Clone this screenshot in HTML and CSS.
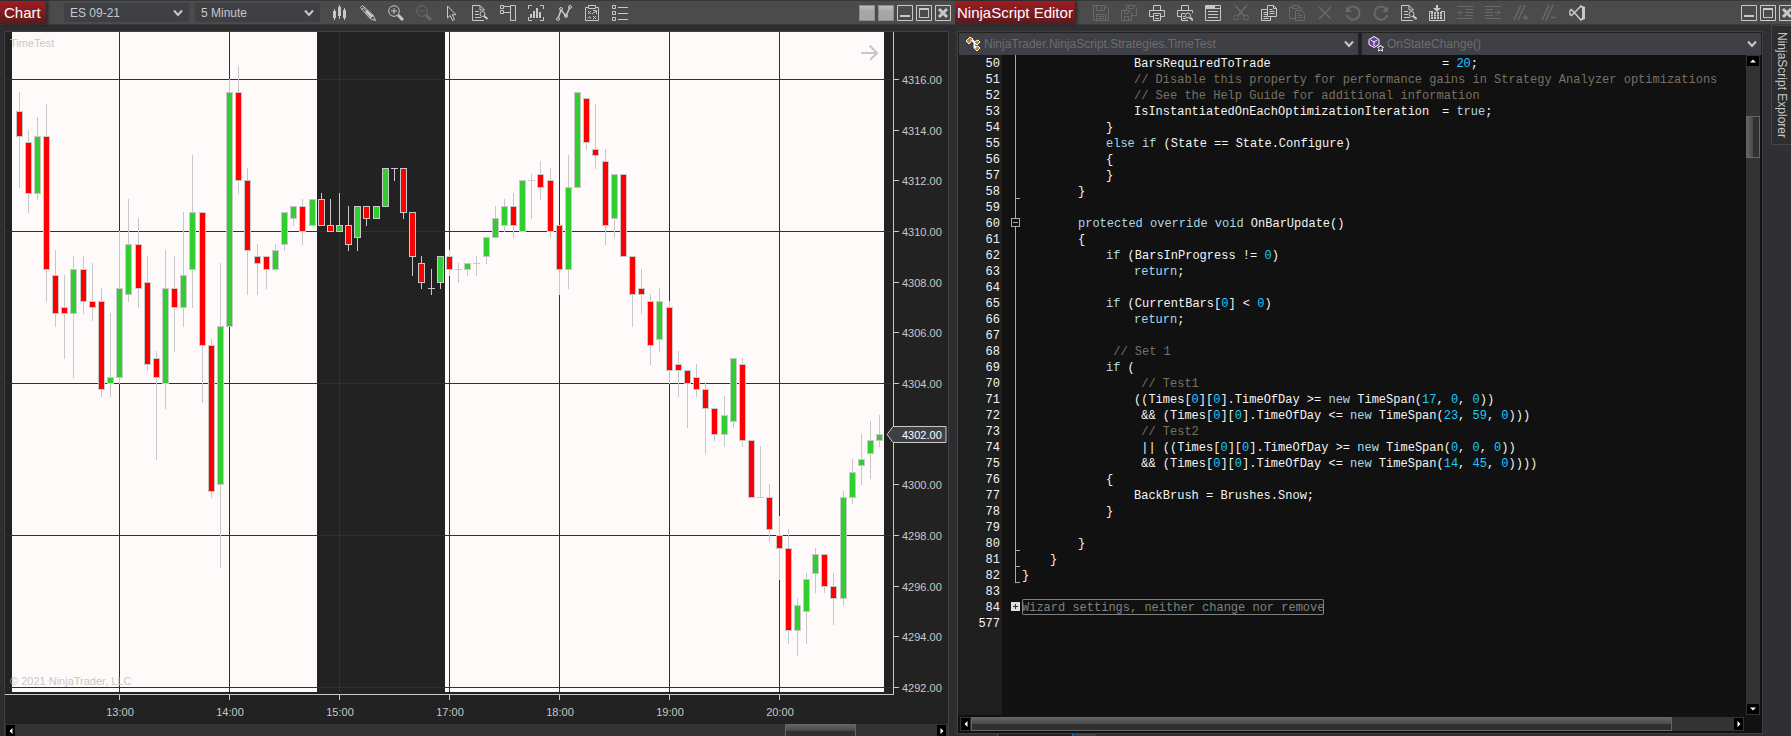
FILE: index.html
```html
<!DOCTYPE html>
<html lang="en">
  <head>
    <meta charset="UTF-8" />
    <meta name="viewport" content="width=device-width, initial-scale=1.0" />
    <title>NinjaTrader</title>
    <link rel="stylesheet" href="styles.css">
  </head>
  <body>
    <main class="desktop">
      <!-- Chart window -->
      <section class="window chart-window">
        <header class="titlebar">
          <h1 class="title">Chart</h1>
          <div class="selects">
            <label class="combo">
              <select aria-label="Instrument"><option>ES 09-21</option></select>
              <svg class="chevron" viewBox="0 0 10 8"><path d="M1 1.500L5 6L9 1.500" /></svg>
            </label>
            <label class="combo">
              <select aria-label="Interval"><option>5 Minute</option></select>
              <svg class="chevron" viewBox="0 0 10 8"><path d="M1 1.500L5 6L9 1.500" /></svg>
            </label>
          </div>
          <nav class="tools">
            <button aria-label="Chart style"><svg viewBox="0 0 16 16"><path class="solid" d="M1 6h3v7H1zM6 2h3v9H6zM11 5h3v8h-3z" /><path d="M2.500 4v11M7.500 0v14M12.500 3v12" /></svg></button>
            <button aria-label="Drawing tools"><svg viewBox="0 0 16 16"><path d="M.5 2.500L2.500 .5L13 10L15.500 15.500L10 13.500zM2 4.500L4.500 2M3.500 3L12 11.500M10 13L13 10" /><path class="solid" d="M5 7l2-2 6 6-2 2z" /></svg></button>
            <button aria-label="Zoom in"><svg viewBox="0 0 16 16"><circle cx="6" cy="6" r="5.300" /><path d="M3 6h6M6 3v6" /><path d="M10 10L15 15" stroke-width="3" /></svg></button>
            <button aria-label="Zoom out" disabled><svg viewBox="0 0 16 16"><circle cx="6" cy="6" r="5.300" /><path d="M3 6h6" /><path d="M10 10L15 15" stroke-width="3" /></svg></button>
            <button aria-label="Cursor"><svg viewBox="0 0 16 16"><path d="M3.500 1v12L6.200 10.500L8.500 15.500L10.500 14.500L8.300 9.700H12z" /></svg></button>
            <button aria-label="Data series"><svg viewBox="0 0 16 16"><path d="M12 15.500H.5V.5H8L12.500 5M8 .5V5h4.500M3 6.500h4M3 9.500h4M3 12.500h6" /><circle cx="10.500" cy="9" r="2.500" /><path d="M12 11l3.500 3" stroke-width="2" /></svg></button>
            <button aria-label="Chart trader"><svg viewBox="0 0 16 16"><path d="M.5 .5h3v3h-3zM.5 5.500h3v3h-3zM10.500 .5h5v15h-5zM4 1.500h6.500M4 7.500h6.500" /></svg></button>
            <button aria-label="Data box"><svg viewBox="0 0 16 16"><path d="M4 .5H.5V4M12 .5h3.500V4M4 15.500H.5V12M12 15.500h3.500V12" /><path class="solid" d="M2 9h2v4H2zM5 6h2v7H5zM8 3h2v10H8zM11 7h2v6h-2z" /></svg></button>
            <button aria-label="Indicators"><svg viewBox="0 0 16 16"><path d="M2 13.500L5 5L10 11L14 2" stroke-width="1.500" /><circle cx="2" cy="14" r="1.500" /><circle cx="5" cy="4" r="1.500" /><circle cx="10" cy="11" r="1.500" /><circle cx="14" cy="2" r="1.500" /></svg></button>
            <button aria-label="Strategies"><svg viewBox="0 0 16 16"><path d="M4 2.500H1.500v13h13v-13H12M4.500 .5h7v3h-7zM4 6l3 3M7 6L4 9M9 11l3 3M12 11l-3 3M4 13.500l1.500-2 1.500 2M8 9l4-3M9 5.500h3.500V9" /></svg></button>
            <button aria-label="Properties"><svg viewBox="0 0 16 16"><path d="M.5 .5h3v3h-3zM.5 6.500h3v3h-3zM.5 12.500h3v3h-3zM6 2.500h10M6 8.500h10M6 14.500h10" /></svg></button>
          </nav>
          <div class="controls">
            <button class="link" aria-label="Instrument link"></button>
            <button class="link" aria-label="Interval link"></button>
            <button aria-label="Minimize"><svg viewBox="0 0 16 16"><path d="M.5 .5h15v15H.5z" /><path class="solid" d="M3 10h10v2H3z" /></svg></button>
            <button aria-label="Maximize"><svg viewBox="0 0 16 16"><path d="M.5 .5h15v15H.5zM3.500 3.500h9v9h-9z" /><path class="solid" d="M3 3h10v2H3z" /></svg></button>
            <button aria-label="Close"><svg viewBox="0 0 16 16"><path d="M.5 .5h15v15H.5z" /><path d="M4 4l8 8M12 4l-8 8" stroke-width="3" /></svg></button>
          </div>
        </header>
        <div class="panel chart-panel">
          <svg id="chart" class="chart" role="img" aria-label="ES 09-21, 5 Minute"></svg>
          <div class="hscroll chart-scroll">
            <button aria-label="Scroll left"><svg viewBox="0 0 8 8"><path class="arrow" d="M5.500 1v6L2.500 4z" /></svg></button>
            <div class="track"><div class="thumb"></div></div>
            <button aria-label="Scroll right"><svg viewBox="0 0 8 8"><path class="arrow" d="M2.500 1v6l3-3z" /></svg></button>
          </div>
        </div>
      </section>

      <!-- Script editor window -->
      <section class="window editor-window">
        <header class="titlebar">
          <h1 class="title">NinjaScript Editor</h1>
          <nav class="tools">
            <button aria-label="Save" disabled><svg viewBox="0 0 16 16"><path d="M.5 .5h12l3 3v12H.5zM3.500 .5v5h8v-5M8.500 2v2M3.500 15.500v-6h9v6M5 11.500h6M5 13.500h6" /></svg></button>
            <button aria-label="Save all" disabled><svg viewBox="0 0 16 16"><path d="M5.500 5V.5h8l2 2v8H11M7.500 .5v3h5v-3M.5 5.500h8l2 2v8H.5zM3.500 5.500v3h4v-3M3.500 15.500v-4h4v4" /></svg></button>
            <button aria-label="Print"><svg viewBox="0 0 16 16"><path d="M4.500 5V.5h7V5M4 11.500H.5v-6h15v6H12M4.500 8.500h7v7h-7zM6 10.500h4M6 13.500h4" /></svg></button>
            <button aria-label="Print preview"><svg viewBox="0 0 16 16"><path d="M4.500 5V.5h7V5M4 11.500H.5v-6h15V8M4.500 15.500v-7H8M4.500 15.500H11M6 11.500h2M6 13.500h3" /><circle cx="11" cy="10.500" r="2.500" /><path d="M13 12.500l3 3" stroke-width="2" /></svg></button>
            <button aria-label="Templates"><svg viewBox="0 0 16 16"><path d="M.5 .5h15v15H.5zM.5 3.500h15M3 6.500h10M3 9.500h10M3 12.500h10" /><path d="M1 2h9" stroke-width="2" /></svg></button>
            <button aria-label="Cut" disabled><svg viewBox="0 0 16 16"><path d="M2 0L11 11M14 0L5 11" stroke-width="1.500" /><circle cx="3" cy="12.500" r="2.500" /><circle cx="13" cy="12.500" r="2.500" /></svg></button>
            <button aria-label="Copy"><svg viewBox="0 0 16 16"><path d="M6.500 .5h6l3 3v8h-9zM12.500 .5v3h3M8.500 4.500h3M8.500 6.500h5M8.500 8.500h5M6 4.500H.5v11h9V12M2.500 7.500H6M2.500 9.500H6M2.500 11.500H6M2.500 13.500h5" /></svg></button>
            <button aria-label="Paste" disabled><svg viewBox="0 0 16 16"><path d="M3 2.500H.5v11H6M10 2.500h2V5M3.500 .5h6v3h-6zM6.500 5.500h6l3 3v7h-9zM8.500 8.500h3M8.500 10.500h5M8.500 12.500h5" /></svg></button>
            <button aria-label="Delete" disabled><svg viewBox="0 0 16 16"><path d="M2 2l12 12M14 2L2 14" stroke-width="1.500" /></svg></button>
            <button aria-label="Undo" disabled><svg viewBox="0 0 16 16"><path d="M3 4a6.500 6.500 0 1 1-1.200 6" stroke-width="2" /><path class="solid" d="M1 1v6h6z" /></svg></button>
            <button aria-label="Redo" disabled><svg viewBox="0 0 16 16"><path d="M13 4a6.500 6.500 0 1 0 1.200 6" stroke-width="2" /><path class="solid" d="M15 1v6H9z" /></svg></button>
            <button aria-label="Find"><svg viewBox="0 0 16 16"><path d="M12 15.500H.5V.5H8L12.500 5M8 .5V5h4.500M3 6.500h4M3 9.500h4M3 12.500h6" /><circle cx="10.500" cy="9" r="2.500" /><path d="M12 11l3.500 3" stroke-width="2" /></svg></button>
            <button aria-label="Compile"><svg viewBox="0 0 16 16"><path class="solid" d="M7 0h2v3h3L8 7L4 3h3z" /><path d="M4 6.500H.5v9h15v-9H12" /><path d="M2 8h12M2 10.500h12M2 13h12" stroke-width="2" stroke-dasharray="2 1" /></svg></button>
            <button aria-label="Outdent" disabled><svg viewBox="0 0 16 16"><path d="M0 1.500h16M8 4.500h8M8 7.500h8M8 10.500h8M0 13.500h16M6 7.500H1M4 4.500l-3 3 3 3" /></svg></button>
            <button aria-label="Indent" disabled><svg viewBox="0 0 16 16"><path d="M0 1.500h16M0 4.500h8M0 7.500h8M0 10.500h8M0 13.500h16M10 7.500h5M12 4.500l3 3-3 3" /></svg></button>
            <button aria-label="Comment" disabled><svg viewBox="0 0 16 16"><path d="M1 15L8 0M5 15L12 0M10 12.500h5M12.500 10v5" stroke-width="1.500" /></svg></button>
            <button aria-label="Uncomment" disabled><svg viewBox="0 0 16 16"><path d="M1 15L8 0M5 15L12 0M10 12.500h5" stroke-width="1.500" /></svg></button>
            <button aria-label="Visual Studio"><svg viewBox="0 0 16 16"><path d="M11.500 1.500L2.500 10.500L1 9.500V5.500L2.500 4.500L11.500 14.500" stroke-width="1.500" /><path class="solid" d="M11 0l5 2v12l-5 2v-2l2-1V3l-2-1z" /></svg></button>
          </nav>
          <div class="controls">
            <button aria-label="Minimize"><svg viewBox="0 0 16 16"><path d="M.5 .5h15v15H.5z" /><path class="solid" d="M3 10h10v2H3z" /></svg></button>
            <button aria-label="Maximize"><svg viewBox="0 0 16 16"><path d="M.5 .5h15v15H.5zM3.500 3.500h9v9h-9z" /><path class="solid" d="M3 3h10v2H3z" /></svg></button>
            <button aria-label="Close"><svg viewBox="0 0 16 16"><path d="M.5 .5h15v15H.5z" /><path d="M4 4l8 8M12 4l-8 8" stroke-width="3" /></svg></button>
          </div>
        </header>

        <div class="editor-body">
          <div class="panel editor-panel">
            <div class="scopes">
              <label class="combo scope">
                <svg class="scope-icon" viewBox="0 0 16 16"><path d="M6 3L9.500 6.500V11h2" fill="none" stroke="#fff" stroke-width="2" /><path d="M1 5L5 1L8 3L4 8zM9 6l4-2 2 2-3 3zM9 12l4-2 2 2-3 3z" fill="#c77d1c" stroke="#fff" /></svg>
                <select aria-label="Class"><option>NinjaTrader.NinjaScript.Strategies.TimeTest</option></select>
                <svg class="chevron" viewBox="0 0 10 8"><path d="M1 1.500L5 6L9 1.500" /></svg>
              </label>
              <label class="combo scope">
                <svg class="scope-icon" viewBox="0 0 16 16"><path d="M6 .5l5 3v5l-5 3-5-3v-5z" fill="#6b3fa0" stroke="#fff" /><path d="M3 4l3 2 3-2M6 6v4" fill="none" stroke="#fff" /><path d="M12.500 9l1 2h2l-1.500 1.500.5 2.500-2-1-2 1 .5-2.500L9.500 11h2z" fill="#222" stroke="#fff" /></svg>
                <select aria-label="Member"><option>OnStateChange()</option></select>
                <svg class="chevron" viewBox="0 0 10 8"><path d="M1 1.500L5 6L9 1.500" /></svg>
              </label>
            </div>
            <div class="code-area">
              <div class="code">
                <div class="line"><span class="num">50</span><span class="fold"></span><code>				BarsRequiredToTrade						= <b>20</b>;</code></div>
                <div class="line"><span class="num">51</span><span class="fold"></span><code>				<i>// Disable this property for performance gains in Strategy Analyzer optimizations</i></code></div>
                <div class="line"><span class="num">52</span><span class="fold"></span><code>				<i>// See the Help Guide for additional information</i></code></div>
                <div class="line"><span class="num">53</span><span class="fold"></span><code>				IsInstantiatedOnEachOptimizationIteration	= <em>true</em>;</code></div>
                <div class="line"><span class="num">54</span><span class="fold"></span><code>			}</code></div>
                <div class="line"><span class="num">55</span><span class="fold"></span><code>			<em>else if</em> (State == State.Configure)</code></div>
                <div class="line"><span class="num">56</span><span class="fold"></span><code>			{</code></div>
                <div class="line"><span class="num">57</span><span class="fold"></span><code>			}</code></div>
                <div class="line"><span class="num">58</span><span class="fold end"></span><code>		}</code></div>
                <div class="line"><span class="num">59</span><span class="fold"></span><code></code></div>
                <div class="line"><span class="num">60</span><span class="fold"><button class="toggle" aria-label="Collapse"></button></span><code>		<em>protected override void</em> OnBarUpdate()</code></div>
                <div class="line"><span class="num">61</span><span class="fold"></span><code>		{</code></div>
                <div class="line"><span class="num">62</span><span class="fold"></span><code>			<em>if</em> (BarsInProgress != <b>0</b>)</code></div>
                <div class="line"><span class="num">63</span><span class="fold"></span><code>				<em>return</em>;</code></div>
                <div class="line"><span class="num">64</span><span class="fold"></span><code></code></div>
                <div class="line"><span class="num">65</span><span class="fold"></span><code>			<em>if</em> (CurrentBars[<b>0</b>] &lt; <b>0</b>)</code></div>
                <div class="line"><span class="num">66</span><span class="fold"></span><code>				<em>return</em>;</code></div>
                <div class="line"><span class="num">67</span><span class="fold"></span><code></code></div>
                <div class="line"><span class="num">68</span><span class="fold"></span><code>			<i> // Set 1</i></code></div>
                <div class="line"><span class="num">69</span><span class="fold"></span><code>			<em>if</em> (</code></div>
                <div class="line"><span class="num">70</span><span class="fold"></span><code>				<i> // Test1</i></code></div>
                <div class="line"><span class="num">71</span><span class="fold"></span><code>				((Times[<b>0</b>][<b>0</b>].TimeOfDay &gt;= <em>new</em> TimeSpan(<b>17</b>, <b>0</b>, <b>0</b>))</code></div>
                <div class="line"><span class="num">72</span><span class="fold"></span><code>				 &amp;&amp; (Times[<b>0</b>][<b>0</b>].TimeOfDay &lt;= <em>new</em> TimeSpan(<b>23</b>, <b>59</b>, <b>0</b>)))</code></div>
                <div class="line"><span class="num">73</span><span class="fold"></span><code>				<i> // Test2</i></code></div>
                <div class="line"><span class="num">74</span><span class="fold"></span><code>				 || ((Times[<b>0</b>][<b>0</b>].TimeOfDay &gt;= <em>new</em> TimeSpan(<b>0</b>, <b>0</b>, <b>0</b>))</code></div>
                <div class="line"><span class="num">75</span><span class="fold"></span><code>				 &amp;&amp; (Times[<b>0</b>][<b>0</b>].TimeOfDay &lt;= <em>new</em> TimeSpan(<b>14</b>, <b>45</b>, <b>0</b>))))</code></div>
                <div class="line"><span class="num">76</span><span class="fold"></span><code>			{</code></div>
                <div class="line"><span class="num">77</span><span class="fold"></span><code>				BackBrush = Brushes.Snow;</code></div>
                <div class="line"><span class="num">78</span><span class="fold"></span><code>			}</code></div>
                <div class="line"><span class="num">79</span><span class="fold"></span><code></code></div>
                <div class="line"><span class="num">80</span><span class="fold end"></span><code>		}</code></div>
                <div class="line"><span class="num">81</span><span class="fold end"></span><code>	}</code></div>
                <div class="line"><span class="num">82</span><span class="fold end"></span><code>}</code></div>
                <div class="line"><span class="num">83</span><span class="fold none"></span><code></code></div>
                <div class="line"><span class="num">84</span><span class="fold none"><button class="toggle closed" aria-label="Expand"></button></span><code class="region">Wizard settings, neither change nor remove</code></div>
                <div class="line"><span class="num">577</span><span class="fold none"></span><code></code></div>
              </div>
              <div class="vscroll">
                <button aria-label="Scroll up"><svg viewBox="0 0 8 8"><path class="arrow" d="M1 5.500h6l-3-3z" /></svg></button>
                <div class="track"><div class="thumb"></div></div>
                <button aria-label="Scroll down"><svg viewBox="0 0 8 8"><path class="arrow" d="M1 2.500h6l-3 3z" /></svg></button>
              </div>
            </div>
            <div class="hscroll editor-scroll">
              <button aria-label="Scroll left"><svg viewBox="0 0 8 8"><path class="arrow" d="M5.500 1v6L2.500 4z" /></svg></button>
              <div class="track"><div class="thumb"></div></div>
              <button aria-label="Scroll right"><svg viewBox="0 0 8 8"><path class="arrow" d="M2.500 1v6l3-3z" /></svg></button>
            </div>
          </div>
          <aside class="rail">
            <button class="explorer-tab">NinjaScript Explorer</button>
          </aside>
        </div>
        <footer class="tabs"><span class="tab"></span><span class="add-tab"></span></footer>
      </section>
    </main>
    <script src="chart.js"></script>
  </body>
</html>
```
FILE: styles.css
```css
* {
  box-sizing: border-box;
}
body {
  margin: 0;
  background: #2d2d30;
  color: #c8c8c8;
  font-family: "Liberation Sans", Arial, sans-serif;
  font-size: 12px;
}
button, select {
  font: inherit;
  color: inherit;
  border: none;
  padding: 0;
  margin: 0;
  background: none;
}
svg {
  display: block;
}
.desktop {
  display: grid;
  grid-template-columns: round(calc(100vw * 8 / 15), 1px) minmax(0, 1fr);
  height: 100vh;
  overflow: hidden;
}
.window {
  display: flex;
  flex-direction: column;
  min-width: 0;
  min-height: 0;
  overflow: hidden;
}
.editor-window {
  background: #303033;
}

/* title bars */
.titlebar {
  display: flex;
  align-items: center;
  height: 25px;
  flex: none;
  border-top: 1px solid #38383b;
  border-bottom: 1px solid #3a3a3d;
  background: #4b4b4b;
}
.title {
  flex: none;
  align-self: stretch;
  width: 46px;
  margin: 0;
  padding-left: 4px;
  background: linear-gradient(#a01c22, #5c1a1c);
  box-shadow: 2px 0 3px rgba(0, 0, 0, 0.5);
  color: #fff;
  font-size: 15px;
  font-weight: normal;
  line-height: 23px;
  white-space: nowrap;
}
.editor-window .title {
  width: 120px;
  padding-left: 2px;
}
.selects {
  display: flex;
  gap: 6px;
  margin: 0 12px 0 18px;
}
.combo {
  position: relative;
  display: flex;
  align-items: center;
  width: 125px;
  height: 19px;
  background: #3f3f46;
}
.combo select {
  appearance: none;
  width: 100%;
  height: 100%;
  padding: 0 20px 0 6px;
  outline: none;
}
.chevron {
  position: absolute;
  right: 6px;
  width: 10px;
  height: 8px;
  fill: none;
  stroke: #c8c8c8;
  stroke-width: 2;
  pointer-events: none;
}
.tools, .controls {
  display: flex;
  flex: none;
}
.tools {
  gap: 12px;
}
.editor-window .tools {
  margin-left: 18px;
}
.controls {
  gap: 3px;
  margin-left: auto;
  padding-right: 4px;
}
.editor-window .controls {
  margin-right: -8px;
}
.tools button, .controls button {
  width: 16px;
  height: 16px;
}
.tools svg, .controls svg {
  width: 16px;
  height: 16px;
  fill: none;
  stroke: #c8c8c8;
}
.tools .solid, .controls .solid {
  fill: #c8c8c8;
  stroke: none;
}
.tools button:disabled svg {
  stroke: #696969;
}
.tools button:disabled .solid {
  fill: #696969;
}
.controls .link {
  background: linear-gradient(#bdbdbd, #a9a5a5 40%);
  border: 1px solid #8c8c8c;
}

/* panels */
.panel {
  display: flex;
  flex-direction: column;
  min-width: 0;
  border: 1px solid #3f3f46;
  background: #222;
}
.chart-panel {
  flex: 1;
  min-height: 0;
  margin: 6px 6px 0 4px;
  border-bottom: none;
}
.chart {
  flex: 1;
  width: 100%;
  min-height: 0;
  font-size: 11px;
  fill: #c8c8c8;
  shape-rendering: crispEdges;
}
.chart .snow {
  fill: snow;
}
.chart .grid {
  fill: #303030;
}
.chart .axis, .chart .wick {
  fill: #c8c8c8;
}
.chart .up {
  fill: limegreen;
  stroke: #c8c8c8;
}
.chart .down {
  fill: red;
  stroke: #c8c8c8;
}
.chart .next {
  fill: none;
  stroke: #c8c8c8;
  stroke-width: 2;
}
.chart .marker {
  fill: #3f3f46;
  stroke: #c8c8c8;
  shape-rendering: auto;
}
.chart .last {
  fill: #fff;
}

/* scroll bars */
.hscroll, .vscroll {
  display: flex;
  flex: none;
  background: #333;
}
.hscroll button, .vscroll button {
  display: flex;
  flex: none;
  align-items: center;
  justify-content: center;
  background: #000;
}
.hscroll button svg, .vscroll button svg {
  width: 8px;
  height: 8px;
}
.arrow {
  fill: #fff;
}
.track {
  display: flex;
  flex: 1;
}
.hscroll .thumb {
  background: linear-gradient(#636363, #4a4a4a 50%, #303030 50%);
  border: 1px solid #666;
}
.chart-scroll {
  height: 12px;
  padding: 1px 2px 0 1px;
}
.chart-scroll button {
  width: 9px;
}
.chart-scroll .thumb {
  width: 71px;
  margin: -1px 81px 0 auto;
  border-bottom: none;
}
.editor-scroll {
  height: 14px;
  margin: 2px 18px 2px 2px;
}
.editor-scroll button {
  width: 11px;
  border: 1px solid #333;
}
.editor-scroll .thumb {
  width: 92%;
}
.vscroll {
  flex-direction: column;
  width: 14px;
  margin-right: 2px;
}
.vscroll button {
  height: 10px;
  margin: 1px;
}
.vscroll .thumb {
  width: 100%;
  height: 42px;
  margin-top: 49px;
  border: 1px solid #666;
  background: linear-gradient(90deg, #636363, #4a4a4a 50%, #303030 50%);
}

/* editor */
.editor-body {
  display: flex;
  flex: 1;
  min-height: 0;
}
.editor-panel {
  flex: 1;
  margin: 6px 0 0 2px;
  background: #111;
}
.scopes {
  display: flex;
  gap: 4px;
  padding: 1px 1px 0;
  background: #222;
}
.scope {
  flex: 1;
  min-width: 0;
  height: 22px;
  padding-left: 6px;
  color: #6d6d6d;
}
.scope select {
  padding-left: 3px;
}
.scope-icon {
  flex: none;
  width: 16px;
  height: 16px;
}
.scope .chevron {
  right: 4px;
}
.code-area {
  display: flex;
  flex: 1;
  min-height: 0;
}
.code {
  flex: 1;
  min-width: 0;
  overflow: hidden;
  background: linear-gradient(90deg, #1e1e1e 44px, #111 44px);
  color: #f5f5f5;
  font-family: "Liberation Mono", "Courier New", monospace;
  font-size: 12px;
  line-height: 18px;
}
.line {
  display: flex;
  height: 16px;
}
.num {
  flex: none;
  width: 44px;
  padding-right: 2px;
  text-align: right;
}
.fold {
  position: relative;
  flex: none;
  width: 5px;
  margin: 0 2px 0 13px;
  border-left: 1px solid #aaa;
}
.fold.end {
  border-bottom: 1px solid #aaa;
}
.fold.none {
  border-color: transparent;
}
.toggle {
  position: absolute;
  top: 3px;
  left: -5px;
  width: 9px;
  height: 9px;
  border: 1px solid #aaa;
  background: linear-gradient(#aaa, #aaa) center / 5px 1px no-repeat #111;
}
.toggle.closed {
  border-color: #ddd;
  background:
    linear-gradient(#333, #333) center / 5px 1px no-repeat,
    linear-gradient(#333, #333) center / 1px 5px no-repeat,
    #ddd;
}
code {
  font: inherit;
  white-space: pre;
  tab-size: 28px;
}
code b {
  color: #1ec8ff;
  font-weight: normal;
}
code em {
  color: #add8e6;
  font-style: normal;
}
code i {
  color: #787163;
  font-style: normal;
}
.region {
  border-radius: 2px;
  box-shadow: inset 0 0 0 1px #808080;
  color: #808080;
}
.rail {
  display: flex;
  flex: none;
  align-items: flex-start;
  justify-content: flex-end;
  width: 28px;
}
.explorer-tab {
  width: 20px;
  padding: 6px 0;
  border: 1px solid #46464a;
  border-right: none;
  background: #2d2d30;
  line-height: 18px;
  writing-mode: vertical-rl;
}
.tabs {
  display: flex;
  flex: none;
  height: 2px;
  padding-left: 42px;
}
.tab {
  width: 76px;
  border: solid #007acc;
  border-width: 0 1px;
  background: #222;
}
.add-tab {
  width: 23px;
  background: #3f3f46;
}
```
FILE: chart.js
```js
// [open, high, low, close], counted in ticks below 4316.00
const bars = [
  [5, 2, 17, 9], [10, 8, 21, 18], [18, 6, 19, 9], [9, 4, 35, 30],
  [31, 27, 39, 37], [36, 31, 44, 37], [37, 28, 47, 30], [30, 28, 37, 35],
  [35, 29, 38, 36], [35, 33, 50, 49], [48, 37, 50, 47], [47, 24, 48, 33],
  [34, 19, 35, 26], [26, 22, 36, 33], [32, 28, 46, 45], [44, 43, 60, 47],
  [48, 27, 52, 33], [33, 28, 43, 36], [36, 21, 39, 31], [30, 12, 36, 21],
  [21, 21, 51, 42], [42, 41, 66, 65], [64, 29, 77, 39], [39, 0, 39, 2],
  [2, -2, 18, 16], [16, 14, 34, 27], [28, 26, 34, 29], [28, 28, 33, 30],
  [30, 26, 30, 27], [26, 21, 27, 21], [22, 20, 23, 20], [20, 19, 26, 24],
  [23, 19, 23, 19], [19, 18, 23, 23], [23, 19, 24, 24], [24, 18, 24, 23],
  [23, 20, 27, 26], [25, 20, 27, 20], [20, 20, 23, 22], [22, 20, 22, 20],
  [20, 14, 20, 14], [14, 14, 16, 14], [14, 14, 22, 21], [21, 21, 31, 28],
  [29, 28, 33, 32], [33, 30, 34, 33], [32, 28, 33, 28], [28, 27, 31, 30],
  [30, 29, 32, 30], [30, 29, 31, 29], [29, 28, 31, 29], [28, 25, 29, 25],
  [25, 20, 25, 22], [23, 19, 24, 20], [20, 18, 25, 23], [24, 16, 24, 16],
  [16, 15, 22, 16], [15, 13, 19, 17], [16, 14, 25, 24], [23, 23, 34, 30],
  [30, 12, 33, 17], [17, 2, 17, 2], [3, 3, 11, 10], [11, 4, 14, 12],
  [13, 11, 26, 23], [22, 15, 25, 15], [15, 15, 28, 28], [28, 28, 39, 34],
  [33, 30, 37, 34], [35, 34, 45, 42], [41, 33, 43, 35], [36, 35, 48, 46],
  [45, 43, 50, 46], [46, 46, 55, 48], [47, 45, 50, 49], [49, 48, 59, 52],
  [52, 52, 57, 56], [56, 50, 58, 53], [54, 44, 55, 44], [45, 44, 58, 57],
  [57, 57, 66, 66], [66, 58, 66, 66], [66, 64, 73, 71], [72, 69, 79, 74],
  [74, 71, 89, 87], [87, 82, 91, 83], [84, 78, 89, 79], [78, 74, 81, 75],
  [75, 75, 81, 80], [80, 78, 86, 82], [82, 65, 83, 66], [66, 60, 67, 62],
  [61, 56, 64, 60], [59, 54, 63, 57], [57, 53, 58, 56]
];

// the session is closed from 16:00 to 17:00
const hours = ["13:00", "14:00", "15:00", "17:00", "18:00", "19:00", "20:00"];

const chart = document.getElementById("chart");
const firstBar = 14;
const barSpacing = 9.157;
const topPrice = 4316;
const tickHeight = 152 / 24;

const barX = i => firstBar + Math.floor(i * barSpacing);
const tickY = t => 47 + Math.round(t * tickHeight);
const rect = (x, y, w, h, cls) =>
  `<rect x="${x}" y="${y}" width="${w}" height="${h}" class="${cls}" />`;

function drawChart() {
  const width = chart.clientWidth;
  const height = chart.clientHeight;
  const axisX = width - 55;
  const axisY = height - 30;
  const plotEnd = axisX - 9;
  let out = "";

  // session background, with the filtered hours left dark
  out += rect(7, 0, 305, axisY - 2, "snow");
  out += rect(440, 0, plotEnd - 440, axisY - 2, "snow");

  for (let t = 0; t <= 96; t += 24) {
    out += rect(1, tickY(t), axisX - 3, 1, "grid");
  }
  hours.forEach((hour, n) => {
    const x = barX(11 + n * 12);
    out += rect(x, 0, 1, axisY - 2, "grid");
    out += rect(x, axisY, 1, 6, "axis");
    out += `<text x="${x + 1}" y="${axisY + 22}" text-anchor="middle">${hour}</text>`;
  });

  bars.forEach(([open, high, low, close], i) => {
    const x = barX(i);
    const top = tickY(Math.min(open, close));
    const bottom = tickY(Math.max(open, close));
    out += rect(x, tickY(high), 1, tickY(low) - tickY(high) + 1, "wick");
    if (open === close) {
      out += rect(x - 3, top, 7, 1, "wick");
    } else {
      out += rect(x - 2.5, top + 0.5, 6, bottom - top, close < open ? "up" : "down");
    }
  });

  // price and time axes
  out += rect(axisX, 0, 1, axisY + 1, "axis");
  out += rect(0, axisY, axisX + 1, 1, "axis");
  for (let t = 0; t <= 96; t += 8) {
    const y = tickY(t);
    out += rect(axisX, y, 6, 1, "axis");
    if (t !== 56) {
      out += `<text x="${axisX + 9}" y="${y + 5}">${(topPrice - t / 4).toFixed(2)}</text>`;
    }
  }

  const lastY = tickY(bars[bars.length - 1][3]) + 0.5;
  out += `<path class="marker" d="M${axisX - 6} ${lastY}l6 -8h53v16h-53z" />`;
  out += `<text class="last" x="${axisX + 9}" y="${lastY + 4}">4302.00</text>`;

  out += `<path class="next" d="M${plotEnd - 23} 21h17m-8 -7l7 7l-7 7" />`;
  out += `<text x="5" y="15">TimeTest</text>`;
  out += `<text x="5" y="${axisY - 9}">© 2021 NinjaTrader, LLC</text>`;
  chart.innerHTML = out;
}

drawChart();
window.addEventListener("resize", drawChart);
```
